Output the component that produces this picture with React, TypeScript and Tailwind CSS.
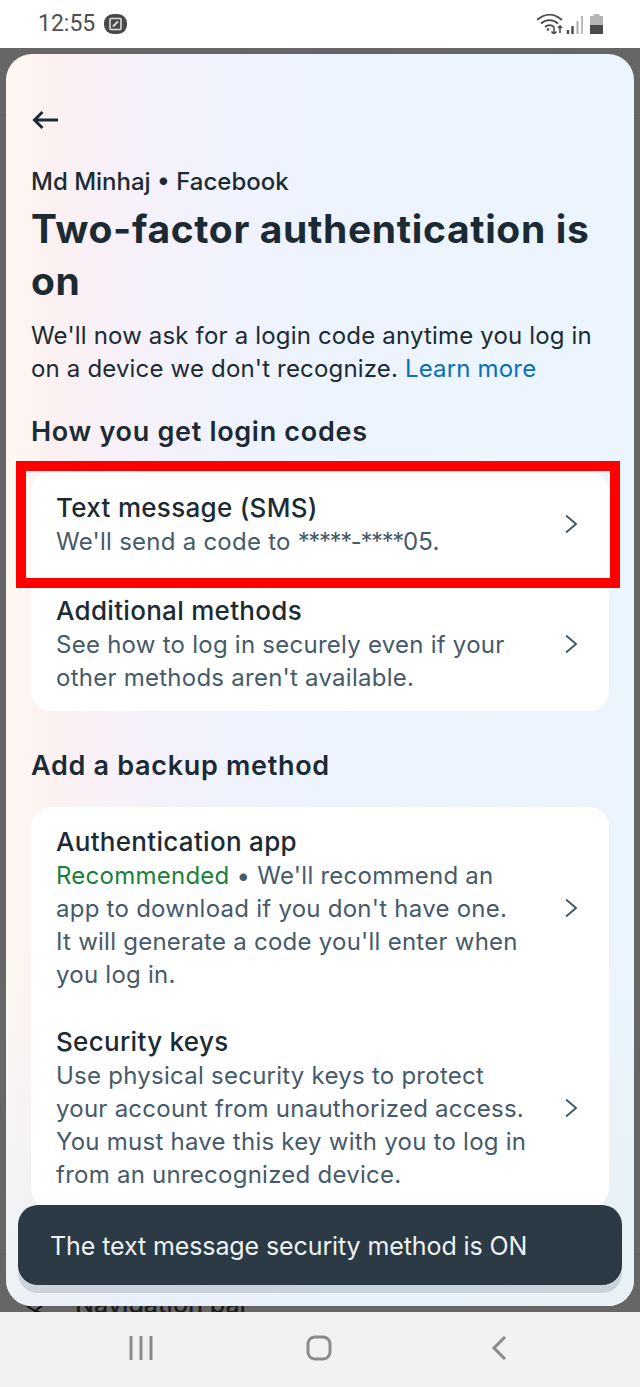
type Row = { title: string; lines: React.ReactNode[]; h: string }

const font = { fontFamily: 'Inter, sans-serif' }

function Chevron() {
  return (
    <svg width="14" height="20" viewBox="0 0 14 20" fill="none" stroke="#465a69" strokeWidth="2" className="shrink-0">
      <path d="M2 1.5l10 8.5-10 8.5" />
    </svg>
  )
}

function MethodRow({ title, lines, h }: Row) {
  return (
    <div className={`flex items-center justify-between pl-[25px] pr-[31px] ${h}`}>
      <div>
        <div className="text-[26px] leading-[34px] font-medium text-[#1c2b33] tracking-[0.3px]">{title}</div>
        {lines.map((line, i) => (
          <div key={i} className="text-[24px] leading-[33px] text-[#465a69] tracking-[0.25px] whitespace-nowrap">
            {line}
          </div>
        ))}
      </div>
      <Chevron />
    </div>
  )
}

export default function App() {
  return (
    <div className="w-[640px] h-[1387px] flex flex-col overflow-hidden" style={font}>
      {/* status bar */}
      <div className="h-12 shrink-0 bg-white flex items-center justify-between pl-[38px] pr-[37px]">
        <div className="flex items-center gap-[9px]">
          <span className="text-[23px] text-[#4f4f4f]" style={{ fontFamily: 'Roboto, sans-serif' }}>12:55</span>
          <svg width="23" height="20" viewBox="0 0 23 20">
            <rect x="0" y="0" width="23" height="20" rx="9" fill="#4a4a4a" />
            <rect x="6" y="4.5" width="11" height="11" rx="1" fill="none" stroke="#ddd" strokeWidth="1.6" />
            <path d="M9 12.5l5-5" stroke="#ddd" strokeWidth="2" />
          </svg>
        </div>
        <div className="flex items-center gap-[7px]">
          <svg width="46" height="20" viewBox="0 0 46 20" fill="none" stroke="#4a4a4a">
            <path d="M0 6C8 -1 17 -1 25 6" strokeWidth="1.8" />
            <path d="M4 9.5C9 5 16 5 21 9.5" strokeWidth="1.8" />
            <path d="M8 13C11 10.5 14 10.5 17 13" strokeWidth="1.8" />
            <circle cx="11" cy="15.5" r="1.3" fill="#4a4a4a" stroke="none" />
            <path d="M17 13v7M14.5 17.5l2.5 2.5 2.5-2.5" strokeWidth="1.6" />
            <path d="M23 19v-7M21 14l2-2 2 2" strokeWidth="1.6" />
            <path d="M31 20v-4" strokeWidth="2.4" />
            <path d="M35.5 20v-8" strokeWidth="2.4" />
            <path d="M40.5 20V7" strokeWidth="2" stroke="#aaa" />
            <path d="M45 20V2" strokeWidth="2" stroke="#bbb" />
          </svg>
          <svg width="13" height="20" viewBox="0 0 13 20">
            <rect x="3.5" y="0" width="6" height="3" fill="#b5b5b5" />
            <rect x="0" y="2" width="13" height="10" fill="#b5b5b5" />
            <rect x="0" y="11" width="13" height="9" fill="#4a4a4a" />
          </svg>
        </div>
      </div>

      {/* dimmed page with bottom sheet */}
      <div className="relative flex-1 min-h-0 bg-[#666666] px-[6px] pt-[6px] pb-[6px]">
        <div className="absolute left-0 right-0 top-[67px] h-px bg-[#5f5f5f]" />
        <div className="absolute left-0 right-0 bottom-[57px] h-px bg-[#5f5f5f]" />
        <svg className="absolute left-[25px] bottom-0" width="20" height="8" viewBox="0 0 20 8" fill="none" stroke="#111" strokeWidth="2">
          <path d="M2 2l8 5 8-6M9 7l8 2" />
        </svg>
        <div className="absolute left-[75px] bottom-[-4px] text-[25px] leading-[24px] font-medium text-[#1c1c1c]">Navigation bar</div>
        <div className="relative h-full rounded-[26px] overflow-hidden bg-[linear-gradient(90deg,#fff8f0_0%,#fcf0f2_8%,#f5f1fb_22%,#eef3fe_42%,#ebf5fd_100%)]">
          <div className="absolute inset-0 bg-[linear-gradient(165deg,transparent_78%,#e6f6ec_100%)]" />
          <div className="absolute inset-0 bg-[linear-gradient(180deg,transparent_70%,#e9effb_100%)] opacity-70" />

          <div className="relative px-[25px] pt-[51px]">
            <svg className="-ml-px" width="30" height="30" viewBox="0 0 30 30" fill="none" stroke="#1c2b33" strokeWidth="3">
              <path d="M28 15H5M12.5 7l-8 8 8 8" />
            </svg>
            <div className="mt-[31px] text-[24px] leading-[32px] text-[#1c2b33] font-medium">Md Minhaj • Facebook</div>
            <h1 className="mt-[5px] text-[39px] leading-[52px] font-bold text-[#1c2b33] tracking-[0.65px] whitespace-nowrap">
              Two-factor authentication is
              <br />
              on
            </h1>
            <p className="mt-[12px] text-[24px] leading-[33px] text-[#1c2b33] tracking-[0.17px]">
              <span className="whitespace-nowrap">We'll now ask for a login code anytime you log in</span>
              <br />
              on a device we don't recognize. <span className="text-[#0a6fb5]">Learn more</span>
            </p>
            <h2 className="mt-[29px] text-[27px] leading-[36px] font-semibold text-[#1c2b33] tracking-[0.7px]">How you get login codes</h2>

            <div className="mt-[22px] rounded-[20px] bg-white">
              <MethodRow
                h="h-[104px]"
                title="Text message (SMS)"
                lines={[
                  <>
                    We'll send a code to <span className="tracking-[-1.4px]">*****-****</span>05.
                  </>,
                ]}
              />
              <MethodRow
                h="h-[135px]"
                title="Additional methods"
                lines={['See how to log in securely even if your', "other methods aren't available."]}
              />
            </div>

            <h2 className="mt-[37px] text-[27px] leading-[36px] font-semibold text-[#1c2b33] tracking-[0.7px]">Add a backup method</h2>

            <div className="mt-[23px] rounded-[20px] bg-white">
              <MethodRow
                h="h-[201px]"
                title="Authentication app"
                lines={[
                  <>
                    <span className="text-[#1a8038]">Recommended</span> • We'll recommend an
                  </>,
                  "app to download if you don't have one.",
                  "It will generate a code you'll enter when",
                  'you log in.',
                ]}
              />
              <MethodRow
                h="h-[200px]"
                title="Security keys"
                lines={[
                  'Use physical security keys to protect',
                  'your account from unauthorized access.',
                  'You must have this key with you to log in',
                  'from an unrecognized device.',
                ]}
              />
            </div>
          </div>

          {/* toast */}
          <div className="absolute left-[12px] right-[12px] bottom-[21px] h-[80px] flex items-center pl-[32px] pt-[4px] rounded-[20px] bg-[#2b3a45] text-[25px] text-[#eef2f4] tracking-[-0.1px] shadow-[0_8px_0_rgba(60,80,100,0.18)]">
            The text message security method is ON
          </div>
        </div>

        {/* red highlight annotation */}
        <div className="absolute left-[16px] top-[413px] w-[604px] h-[127px] border-[10px] border-[#ff0000]" />
      </div>

      {/* nav bar */}
      <div className="h-[75px] shrink-0 bg-[#f2f2f2] relative z-10 flex items-center justify-between pl-[129px] pr-[133px] pb-[3px]">
        <svg width="24" height="24" viewBox="0 0 24 24" stroke="#8a8a8a" strokeWidth="3" fill="none">
          <path d="M2 0v24M12 0v24M22 0v24" />
        </svg>
        <svg className="mr-[6px]" width="26" height="26" viewBox="0 0 26 26" fill="none" stroke="#8a8a8a" strokeWidth="3">
          <rect x="2" y="2" width="22" height="22" rx="7" />
        </svg>
        <svg width="16" height="24" viewBox="0 0 16 24" fill="none" stroke="#8a8a8a" strokeWidth="3">
          <path d="M14 1L3 12l11 11" />
        </svg>
      </div>
    </div>
  )
}
